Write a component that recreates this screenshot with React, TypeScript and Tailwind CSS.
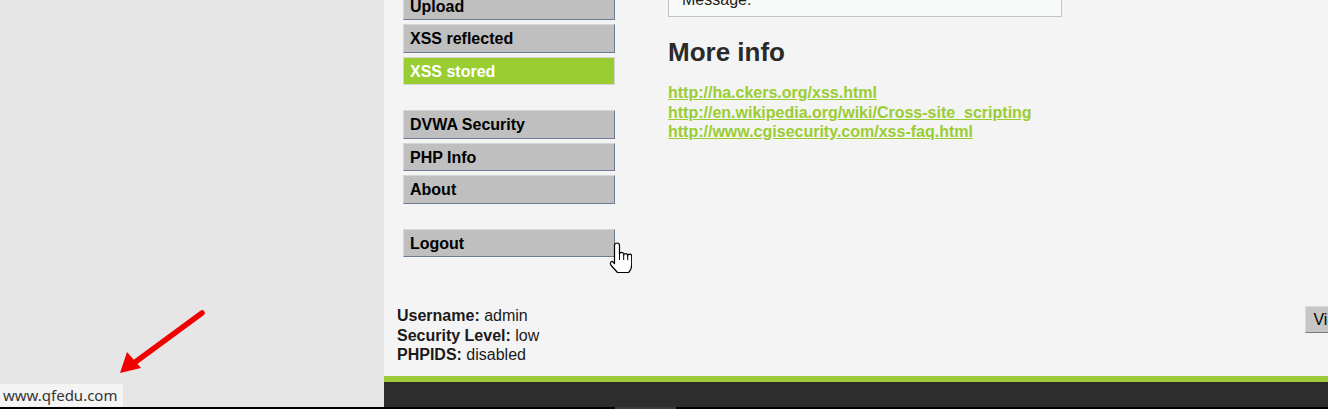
import React from "react";

const menuTop = ["Upload", "XSS reflected", "XSS stored"];
const menuMid = ["DVWA Security", "PHP Info", "About"];

const MenuItem = ({ label, active }: { label: string; active?: boolean }) => (
  <li className="mb-[4px]">
    <a
      className={
        active
          ? "flex h-[28.5px] items-center px-[6px] pt-[2px] border border-[#d4d4d4] bg-[#9acd32] text-white font-bold text-[16px]"
          : "flex h-[28.5px] items-center px-[6px] pt-[2px] border-t border-l border-t-[#d6d6d6] border-l-[#d6d6d6] border-r border-b border-r-[#6e7b94] border-b-[#6e7b94] bg-[#bfbfbf] text-black font-bold text-[16px]"
      }
    >
      {label}
    </a>
  </li>
);

const links = [
  "http://ha.ckers.org/xss.html",
  "http://en.wikipedia.org/wiki/Cross-site_scripting",
  "http://www.cgisecurity.com/xss-faq.html",
];

const HandCursor = () => (
  <svg width="26" height="34" viewBox="0 0 26 34" className="absolute left-[222px] top-[240px]">
    <path
      d="M8.5 5.5a2.5 2.5 0 0 1 5 0V14a2.2 2.2 0 0 1 4.2 0v1a2.1 2.1 0 0 1 4 0v1.2a2 2 0 0 1 4 0V25q0 4-3 7.5H11.5L5.2 25.5q-2-3 1-4.2l2.3 2.2Z"
      fill="#fff"
      stroke="#000"
      strokeWidth="1.2"
      strokeLinejoin="round"
    />
    <path d="M13.5 14v6M17.7 15v5M21.7 16.2v4" stroke="#000" strokeWidth="1" fill="none" />
  </svg>
);

export default function App() {
  return (
    <div className="w-[1328px] h-[409px] overflow-hidden flex flex-col font-['Liberation_Sans',Arial,sans-serif]">
      <div className="flex h-[407px]">
        {/* left window */}
        <div className="relative w-[384px] bg-[#e6e6e6] flex flex-col justify-end">
          <svg width="384" height="409" className="absolute left-0 top-0">
            <line x1="202" y1="313" x2="134" y2="363" stroke="#f20000" strokeWidth="5.5" strokeLinecap="round" />
            <polygon points="120,373 127,352 141,368" fill="#f20000" />
          </svg>
          <div className="relative w-[123px] h-[23px] bg-[#f4f4f4] flex items-center pl-[3px] text-[15px] text-[#333] font-['Noto_Sans',sans-serif]">
            www.qfedu.com
          </div>
        </div>

        {/* DVWA page */}
        <div className="relative flex-1 flex flex-col bg-[#f4f4f4] overflow-hidden">
          <div className="flex-1 flex flex-col">
            <div className="flex pl-[19px] -mt-[8.5px]">
              <div className="w-[212px]">
                <ul>
                  {menuTop.map((m) => (
                    <MenuItem key={m} label={m} active={m === "XSS stored"} />
                  ))}
                </ul>
                <ul className="mt-[25px]">
                  {menuMid.map((m) => (
                    <MenuItem key={m} label={m} />
                  ))}
                </ul>
                <ul className="mt-[25px]">
                  <MenuItem label="Logout" />
                </ul>
              </div>

              <div className="ml-[53px] w-[394px]">
                <div className="-mt-[16px] h-[41px] border border-[#c4c4c4] bg-[#f8f9f9] flex items-end px-[13px] pb-[4px] text-[16px] text-[#222]">
                  Message:
                </div>
                <h2 className="mt-[20px] text-[26px] leading-[30px] font-bold text-[#2a2a2a]">More info</h2>
                <ul className="mt-[16.5px] text-[16px] leading-[19.5px] font-bold">
                  {links.map((l) => (
                    <li key={l}>
                      <a className="text-[#9acd32] underline whitespace-nowrap">{l}</a>
                    </li>
                  ))}
                </ul>
              </div>
            </div>

            <div className="flex items-start mt-[45px] pl-[13px]">
              <div className="text-[16px] leading-[19.5px] text-[#1a1a1a]">
                <div>
                  <b>Username:</b> admin
                </div>
                <div>
                  <b>Security Level:</b> low
                </div>
                <div>
                  <b>PHPIDS:</b> disabled
                </div>
              </div>
              <button className="ml-auto -mr-[83px] h-[27px] px-[7px] bg-[#c6c6c6] border border-[#d8d8d8] border-b-[#7a7a7a] border-r-[#7a7a7a] text-[16px] text-black">
                View Source
              </button>
            </div>
          </div>

          <div className="h-[31px] border-t-[6px] border-[#9dc93a] bg-[#2d2d2d]" />
          <HandCursor />
        </div>
      </div>
      <div className="h-[2px] bg-black flex">
        <div className="ml-[615px] w-[61px] bg-[#3a3a3a]" />
      </div>
    </div>
  );
}
